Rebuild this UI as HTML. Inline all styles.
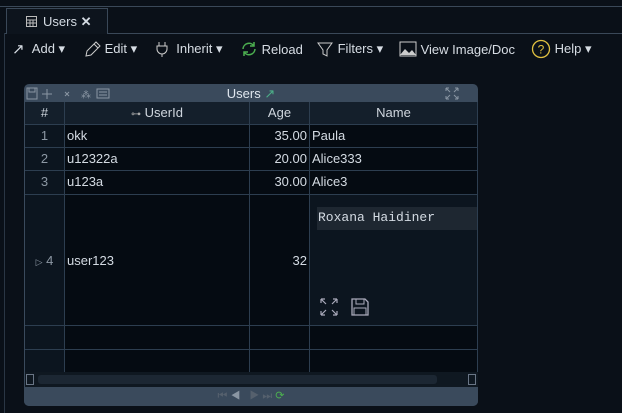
<!DOCTYPE html>
<html><head><meta charset="utf-8">
<style>
*{box-sizing:border-box;margin:0;padding:0}
body{width:622px;height:413px;background:#0a1018;font-family:"Liberation Sans",sans-serif;color:#d4dbe3;overflow:hidden;position:relative;font-size:13px}
.abs{position:absolute}
.tab{left:6px;top:8px;width:102px;height:26px;border:1px solid #3a4858;border-bottom:none;background:#0d141d;font-size:13px;padding:5px 0 0 36px}
.tb{top:38px;height:22px;font-size:13px;color:#d7dde4;display:flex;align-items:center}
.grid{left:24px;top:84px;width:454px;height:322px;background:#3a4a5c;border-radius:5px;overflow:hidden}
.title{left:0;top:0;width:454px;height:18px;text-align:center;font-size:13px;color:#dfe6ee;line-height:19px}
.cell{position:absolute;border-right:1px solid #2d3e50;border-bottom:1px solid #2d3e50;line-height:22px;font-size:13px;white-space:nowrap;overflow:hidden}
.h{background:#141f2b;color:#cfd6de;text-align:center}
.d{background:#050b12}
.n{background:#0c151f;color:#8d98a4;text-align:center}
</style></head><body>
<div class="abs" style="left:0;top:6px;width:622px;height:1px;background:#3a4858"></div>
<div class="abs" style="left:5px;top:33px;width:617px;height:1px;background:#3a4858"></div>
<div class="abs" style="left:4px;top:33px;width:1px;height:380px;background:#2a3644"></div>
<div class="abs tab"><svg class="abs" style="left:19px;top:7px" width="11" height="11"><rect x=".5" y=".5" width="10" height="10" fill="none" stroke="#bbb"/><path d="M1 4h9M4 4v6M7 4v6M1 7h9" stroke="#bbb"/></svg>Users <b>✕</b></div>

<div class="abs tb" style="left:12px"><span style="font-size:15px">↗</span>&nbsp;&nbsp;Add ▾</div>
<div class="abs tb" style="left:83px"><svg width="18" height="18"><path d="M3 16l1-5 9-9 4 4-9 9z M11 4l4 4" fill="none" stroke="#ccc"/></svg>&nbsp;Edit ▾</div>
<div class="abs tb" style="left:155px"><svg width="14" height="18"><path d="M4 2v4M10 2v4M2 6h10v3a5 5 0 0 1-10 0z M7 14v3" fill="none" stroke="#ccc"/></svg>&nbsp;&nbsp;Inherit ▾</div>
<div class="abs tb" style="left:240px"><svg width="18" height="18"><path d="M3 9a6 6 0 0 1 11-3M15 9a6 6 0 0 1-11 3" fill="none" stroke="#4caf50" stroke-width="1.5"/><path d="M14 2v4h-4M4 16v-4h4" fill="none" stroke="#4caf50" stroke-width="1.5"/></svg>&nbsp;Reload</div>
<div class="abs tb" style="left:316px"><svg width="18" height="18"><path d="M2 3h14l-5 7v6l-4-2v-4z" fill="none" stroke="#ccc"/></svg>&nbsp;Filters ▾</div>
<div class="abs tb" style="left:399px"><svg width="18" height="16"><rect x="1" y="1" width="16" height="14" fill="none" stroke="#ccc"/><path d="M1 14l5-6 4 4 3-3 4 5z" fill="#ccc"/></svg>&nbsp;View Image/Doc</div>
<div class="abs tb" style="left:531px"><svg width="20" height="20"><circle cx="10" cy="10" r="8.5" fill="none" stroke="#e0c040" stroke-width="1.3"/><text x="10" y="14.5" font-size="12" fill="#e0c040" text-anchor="middle" font-family="Liberation Sans">?</text></svg>&nbsp;Help ▾</div>

<div class="abs grid">
 <div class="abs title">Users <span style="color:#4caf88">↗</span></div>
 <svg class="abs" style="left:2px;top:3px" width="90" height="13"><rect x="1" y="1" width="10" height="11" fill="none" stroke="#8a96a3"/><rect x="3" y="1" width="6" height="4" fill="none" stroke="#8a96a3"/><path d="M21 2v10M16 7h10" stroke="#8a96a3"/><path d="M39 5l4 4M43 5l-4 4" stroke="#8a96a3"/><text x="55" y="11" font-size="10" fill="#8a96a3">⁂</text><rect x="71" y="2" width="12" height="9" fill="none" stroke="#8a96a3"/><path d="M73 5h8M73 8h8" stroke="#8a96a3"/></svg>
 <svg class="abs" style="left:421px;top:3px" width="14" height="13"><path d="M1 1l4 4M1 1h3M1 1v3M13 1l-4 4M13 1h-3M13 1v3M1 12l4-4M1 12h3M1 12v-3M13 12l-4-4M13 12h-3M13 12v-3" stroke="#8a96a3"/></svg>
 <div class="cell h" style="left:1px;top:18px;width:40px;height:23px">#</div>
 <div class="cell h" style="left:41px;top:18px;width:185px;height:23px"><span style="font-size:10px;color:#aaa">⊶</span> UserId</div>
 <div class="cell h" style="left:226px;top:18px;width:60px;height:23px">Age</div>
 <div class="cell h" style="left:286px;top:18px;width:168px;height:23px">Name</div>

 <div class="cell n" style="left:1px;top:41px;width:40px;height:23px">1</div>
 <div class="cell d" style="left:41px;top:41px;width:185px;height:23px;padding-left:2px">okk</div>
 <div class="cell d" style="left:226px;top:41px;width:60px;height:23px;text-align:right;padding-right:2px">35.00</div>
 <div class="cell d" style="left:286px;top:41px;width:168px;height:23px;padding-left:2px">Paula</div>

 <div class="cell n" style="left:1px;top:64px;width:40px;height:23px">2</div>
 <div class="cell d" style="left:41px;top:64px;width:185px;height:23px;padding-left:2px">u12322a</div>
 <div class="cell d" style="left:226px;top:64px;width:60px;height:23px;text-align:right;padding-right:2px">20.00</div>
 <div class="cell d" style="left:286px;top:64px;width:168px;height:23px;padding-left:2px">Alice333</div>

 <div class="cell n" style="left:1px;top:87px;width:40px;height:24px">3</div>
 <div class="cell d" style="left:41px;top:87px;width:185px;height:24px;padding-left:2px">u123a</div>
 <div class="cell d" style="left:226px;top:87px;width:60px;height:24px;text-align:right;padding-right:2px">30.00</div>
 <div class="cell d" style="left:286px;top:87px;width:168px;height:24px;padding-left:2px">Alice3</div>

 <div class="cell n" style="left:1px;top:111px;width:40px;height:131px;line-height:131px"><span style="font-size:9px">▷</span> 4</div>
 <div class="cell d" style="left:41px;top:111px;width:185px;height:131px;line-height:131px;padding-left:2px">user123</div>
 <div class="cell d" style="left:226px;top:111px;width:60px;height:131px;line-height:131px;text-align:right;padding-right:2px">32</div>
 <div class="cell" style="left:286px;top:111px;width:168px;height:131px;background:#0c151f">
   <div class="abs" style="left:7px;top:12px;width:165px;height:23px;background:#1e2731;font-family:'Liberation Mono',monospace;font-size:13px;color:#d4dbe3;padding-left:1px">Roxana Haidiner</div>
   <svg class="abs" style="left:9px;top:102px" width="20" height="20"><path d="M2 2l5 5M2 2h4M2 2v4M18 2l-5 5M18 2h-4M18 2v4M2 18l5-5M2 18h4M2 18v-4M18 18l-5-5M18 18h-4M18 18v-4" stroke="#aab" stroke-width="1.2"/></svg>
   <svg class="abs" style="left:40px;top:102px" width="20" height="20"><path d="M2 2h13l3 3v13H2z" fill="none" stroke="#aab" stroke-width="1.3"/><rect x="6" y="2" width="8" height="5" fill="none" stroke="#aab"/><rect x="4" y="11" width="12" height="7" fill="none" stroke="#aab"/></svg>
 </div>
 <div class="cell n" style="left:1px;top:242px;width:40px;height:24px"></div>
 <div class="cell d" style="left:41px;top:242px;width:185px;height:24px"></div>
 <div class="cell d" style="left:226px;top:242px;width:60px;height:24px"></div>
 <div class="cell d" style="left:286px;top:242px;width:168px;height:24px"></div>
 <div class="cell n" style="left:1px;top:266px;width:40px;height:22px;border-bottom:none"></div>
 <div class="cell d" style="left:41px;top:266px;width:185px;height:22px;border-bottom:none"></div>
 <div class="cell d" style="left:226px;top:266px;width:60px;height:22px;border-bottom:none"></div>
 <div class="cell d" style="left:286px;top:266px;width:168px;height:22px;border-bottom:none"></div>
 <div class="abs" style="left:1px;top:288px;width:453px;height:15px;background:#0f1821"></div>
 <div class="abs" style="left:2px;top:290px;width:8px;height:11px;border:1px solid #6a7686"></div>
 <div class="abs" style="left:14px;top:291px;width:399px;height:9px;background:#1c2733;border-radius:3px"></div>
 <div class="abs" style="left:444px;top:290px;width:8px;height:11px;border:1px solid #6a7686"></div>
 <div class="abs" style="left:0;top:303px;width:454px;height:19px;background:#3a4a5c;text-align:center;font-size:11px;color:#55606d;line-height:19px">⏮ <span style="color:#8a96a3">◀</span> &nbsp; ▶ ⏭ <span style="color:#4caf50">⟳</span></div>
</div>
</body></html>
